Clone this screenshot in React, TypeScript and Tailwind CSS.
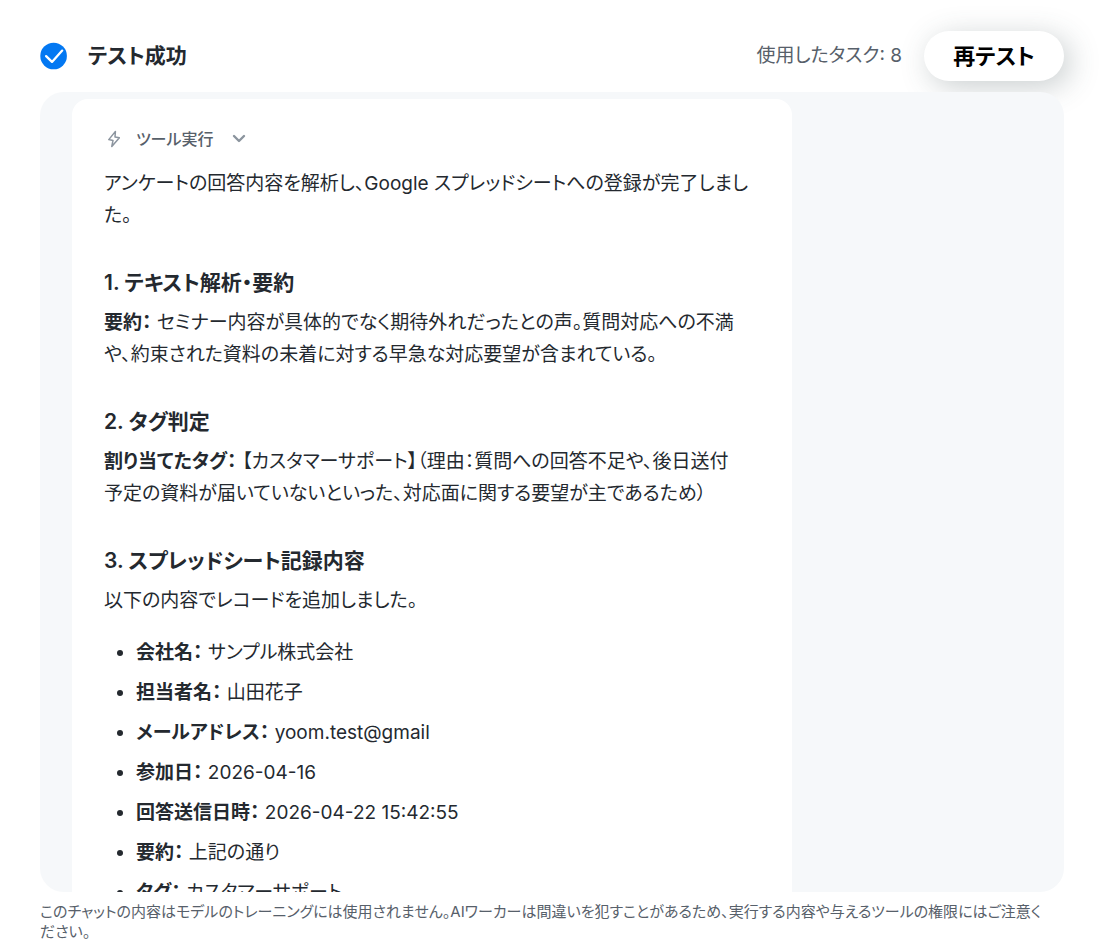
import React from "react";

const sections = [
  {
    title: "1. テキスト解析・要約",
    label: "要約：",
    body: "セミナー内容が具体的でなく期待外れだったとの声。質問対応への不満や、約束された資料の未着に対する早急な対応要望が含まれている。",
  },
  {
    title: "2. タグ判定",
    label: "割り当てたタグ：",
    body: "【カスタマーサポート】（理由：質問への回答不足や、後日送付予定の資料が届いていないといった、対応面に関する要望が主であるため）",
  },
];

const records = [
  { label: "会社名：", value: "サンプル株式会社" },
  { label: "担当者名：", value: "山田花子" },
  { label: "メールアドレス：", value: "yoom.test@gmail" },
  { label: "参加日：", value: "2026-04-16" },
  { label: "回答送信日時：", value: "2026-04-22 15:42:55" },
  { label: "要約：", value: "上記の通り" },
  { label: "タグ：", value: "カスタマーサポート" },
];

function SuccessIcon() {
  return (
    <svg className="size-7 shrink-0" viewBox="0 0 28 28" fill="none" aria-hidden="true">
      <circle cx="13.6" cy="14" r="13.3" fill="#0378f2" />
      <path d="M6.1 14.1 12 19.9 22.2 8.6" stroke="#fff" strokeWidth="2.3" strokeLinecap="round" strokeLinejoin="round" />
    </svg>
  );
}

function BoltIcon() {
  return (
    <svg className="h-5 w-4 shrink-0" viewBox="0 0 16 20" fill="none" aria-hidden="true">
      <path
        d="M11.4 2.4 4.8 10.6 9 11.4 7.8 17.4 15.4 8.8 11 8Z"
        stroke="#8b949e"
        strokeWidth="1.5"
        strokeLinejoin="round"
      />
    </svg>
  );
}

function ChevronIcon() {
  return (
    <svg className="size-4 shrink-0" viewBox="0 0 16 16" fill="none" aria-hidden="true">
      <path d="M3 5 8 10 13 5" stroke="#8b949e" strokeWidth="2.4" strokeLinecap="round" strokeLinejoin="round" />
    </svg>
  );
}

function Heading({ children }: { children: React.ReactNode }) {
  return <h2 className="mt-[35px] mb-2 text-[21px] leading-8 font-semibold">{children}</h2>;
}

export default function App() {
  return (
    <div className="flex h-screen flex-col bg-white pr-[50px] pl-10 font-[Inter,'Noto_Sans_CJK_JP',sans-serif] text-[#24292f] [font-feature-settings:'palt']">
      <header className="flex h-[92px] shrink-0 items-center justify-between pt-5">
        <div className="flex items-center gap-5">
          <SuccessIcon />
          <h1 className="text-[21px] font-semibold">テスト成功</h1>
        </div>
        <div className="flex items-center gap-[22px]">
          <p className="text-[19px] text-[#57606a]">使用したタスク: 8</p>
          <button
            type="button"
            className="h-[50px] min-w-[140px] rounded-full bg-white px-7 text-[22px] leading-8 font-bold text-black shadow-[6px_6px_30px_rgba(60,78,84,0.28)]"
          >
            再テスト
          </button>
        </div>
      </header>

      <main className="relative min-h-0 flex-1 overflow-y-auto rounded-3xl bg-[#f6f8fa] px-8 pt-[7px] [scrollbar-width:none]">
        <article className="max-w-[720px] rounded-2xl bg-white px-8 pt-7 pb-8 text-[19px] leading-8">
          <button type="button" className="flex h-6 items-center text-base text-[#57606a]">
            <BoltIcon />
            <span className="mr-[18px] ml-4 font-medium">ツール実行</span>
            <ChevronIcon />
          </button>
          <p className="mt-[17px]">
            アンケートの回答内容を解析し、Google スプレッドシートへの登録が完了しました。
          </p>
          {sections.map((section) => (
            <section key={section.title}>
              <Heading>{section.title}</Heading>
              <p className="pr-4">
                <strong className="font-semibold">{section.label}</strong> {section.body}
              </p>
            </section>
          ))}
          <section>
            <Heading>3. スプレッドシート記録内容</Heading>
            <p>以下の内容でレコードを追加しました。</p>
            <ul className="mt-5 flex list-disc flex-col gap-2 pl-8">
              {records.map((record) => (
                <li key={record.label}>
                  <strong className="font-semibold">{record.label}</strong> {record.value}
                </li>
              ))}
            </ul>
          </section>
        </article>
      </main>

      <footer className="h-[58px] shrink-0 pt-2.5 pr-4">
        <p className="text-[15px] leading-5 text-[#57606a]">
          このチャットの内容はモデルのトレーニングには使用されません。AIワーカーは間違いを犯すことがあるため、実行する内容や与えるツールの権限にはご注意ください。
        </p>
      </footer>
    </div>
  );
}
